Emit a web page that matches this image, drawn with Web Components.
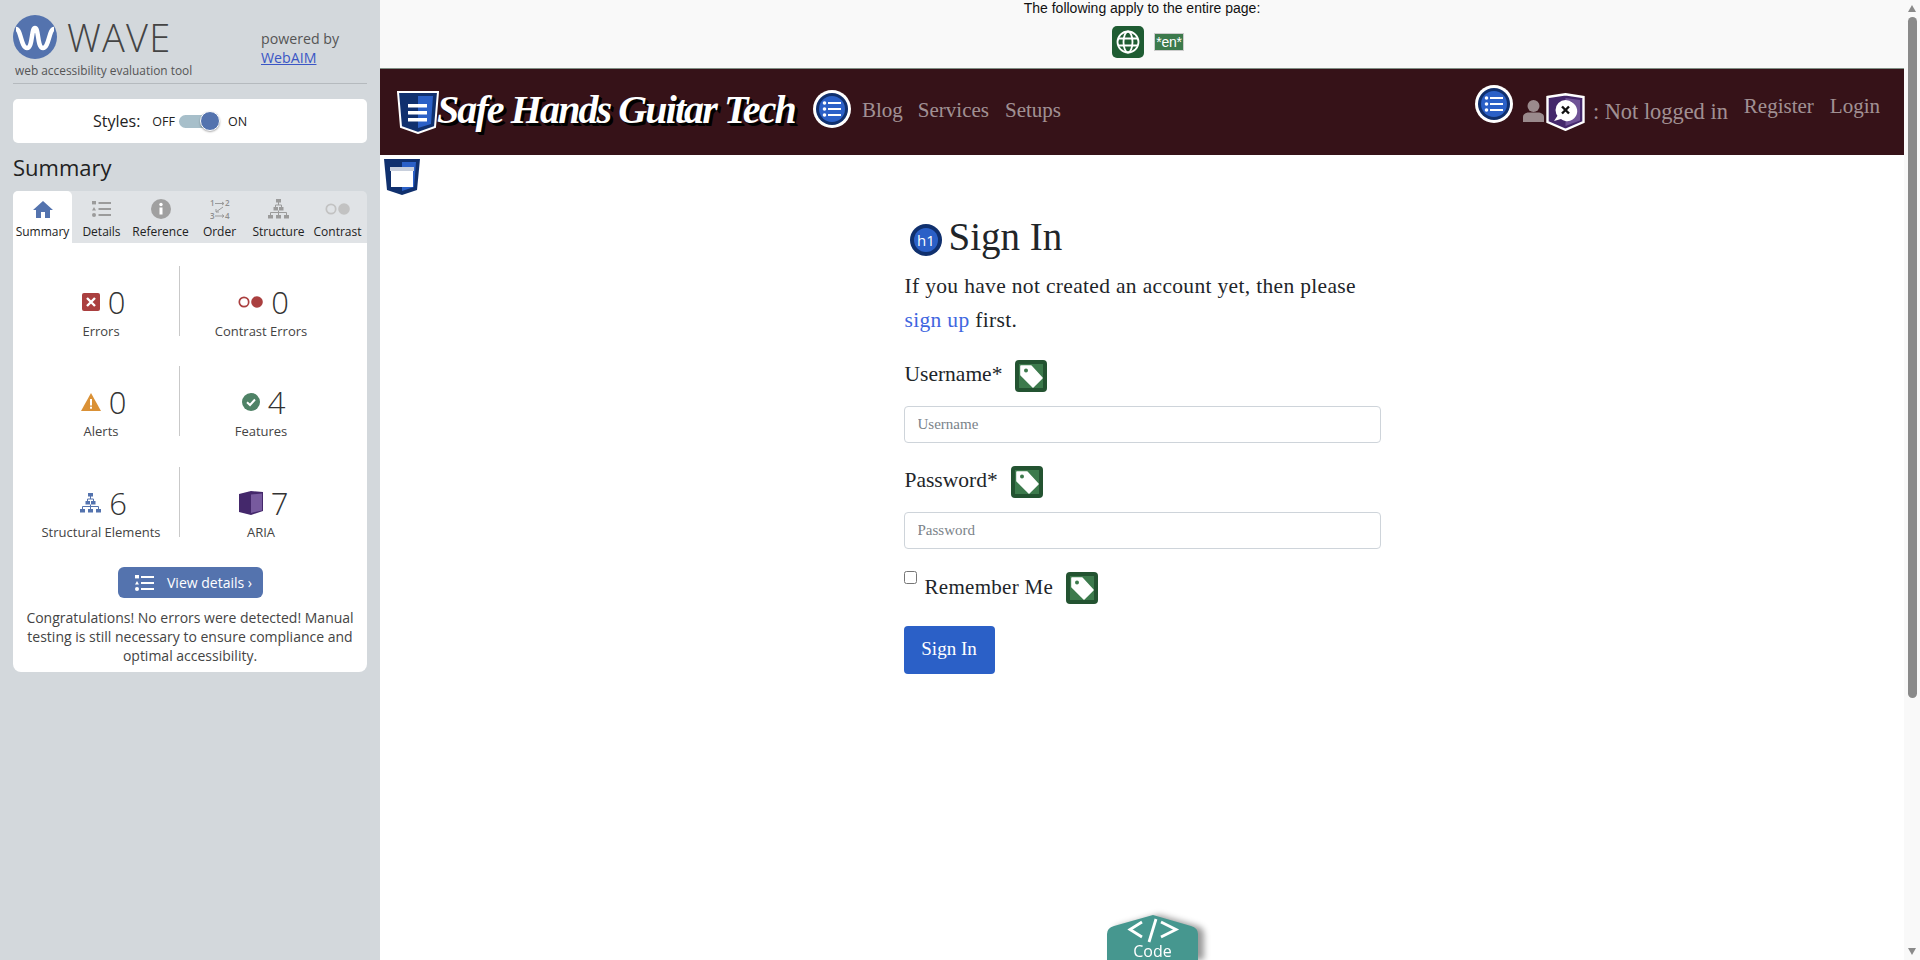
<!DOCTYPE html>
<html lang="en">
<head>
<meta charset="utf-8">
<title>Sign In</title>
<style>
    html, body { margin: 0; height: 960px; overflow: hidden; background: #fff; }
    body { display: flex; }
</style>
</head>
<body>
<wave-sidebar></wave-sidebar>
<site-main></site-main>
<page-scrollbar></page-scrollbar>

<script>
const structureIcon = (color) => `
    <svg width="21" height="20" viewBox="0 0 21 20" fill="${color}">
        <rect x="8" y="0" width="5" height="3.5"/><rect x="5.5" y="8" width="4.5" height="3.5"/><rect x="11" y="8" width="4.5" height="3.5"/>
        <rect x="0" y="16" width="5" height="3.5"/><rect x="8" y="16" width="5" height="3.5"/><rect x="16" y="16" width="5" height="3.5"/>
        <path d="M10.5 3v3M7.5 8V6h6v2M2.5 16v-2.5h16V16M10.5 11.5V16" fill="none" stroke="${color}"/>
    </svg>`

const listBars = (color, x, w) => `
    <g fill="${color}"><rect x="${x}" y="1" width="${w}" height="2"/><rect x="${x}" y="7" width="${w}" height="2"/><rect x="${x}" y="13" width="${w}" height="2"/></g>`

const shieldPath = 'M1 1H41L38 36L21 42L4 36Z'

const icons = {
    wave: `<svg width="44" height="44" viewBox="0 0 44 44"><circle cx="22" cy="22" r="22" fill="#5473ae"/>
        <path d="M3 14C8 14 8 33 14 33C20 33 18 13 22 13C26 13 24 33 30 33C36 33 36 14 41 14" fill="none" stroke="#fff" stroke-width="4.5"/></svg>`,
    home: `<svg width="20" height="17" viewBox="0 0 20 17"><path d="M10 0L20 9H17V17H12V11H8V17H3V9H0Z" fill="#5473ae"/></svg>`,
    details: `<svg width="19" height="16" viewBox="0 0 19 16"><rect x="0" y="0" width="4" height="3.4" fill="#9b9b9b"/><path d="M2 6L4 9.5H0Z" fill="#9b9b9b"/><circle cx="2" cy="14" r="2" fill="#9b9b9b"/>${listBars('#9b9b9b', 6.5, 12.5)}</svg>`,
    info: `<svg width="20" height="20" viewBox="0 0 20 20"><circle cx="10" cy="10" r="10" fill="#a0a0a0"/><rect x="8.5" y="8.5" width="3" height="7" fill="#fff"/><circle cx="10" cy="5.5" r="1.7" fill="#fff"/></svg>`,
    order: `<svg width="20" height="25" viewBox="0 -2 20 25"><g font-family="Open Sans" font-size="8" font-weight="600" fill="#8e8e8e"><text x="0" y="7">1</text><text x="15" y="7">2</text><text x="0" y="20">3</text><text x="15" y="20">4</text></g>
        <path d="M5 4.5H14M12 3L14 4.5L12 6M5 17H14M12 15.5L14 17L12 18.5M13 8L6 13M6 10V13H9" fill="none" stroke="#9b9b9b"/></svg>`,
    structureGrey: structureIcon('#9b9b9b'),
    contrastGrey: `<svg width="25" height="12" viewBox="0 0 25 12"><circle cx="6" cy="6" r="4.7" fill="none" stroke="#c2c2c2" stroke-width="1.7"/><circle cx="19" cy="6" r="5.8" fill="#c2c2c2"/></svg>`,
    error: `<svg width="18" height="18" viewBox="0 0 18 18"><rect width="18" height="18" rx="2" fill="#aa3f3f"/><path d="M5 5L13 13M13 5L5 13" stroke="#fff" stroke-width="2.4"/></svg>`,
    contrast: `<svg width="25" height="12" viewBox="0 0 25 12"><circle cx="6" cy="6" r="4.7" fill="none" stroke="#aa3f3f" stroke-width="1.7"/><circle cx="19" cy="6" r="5.8" fill="#aa3f3f"/></svg>`,
    alert: `<svg width="20" height="18" viewBox="0 0 20 18"><path d="M10 0L20 18H0Z" fill="#da9136"/><rect x="9" y="6" width="2" height="6.5" fill="#fff"/><rect x="9" y="13.7" width="2" height="2" fill="#fff"/></svg>`,
    feature: `<svg width="18" height="18" viewBox="0 0 18 18"><circle cx="9" cy="9" r="9" fill="#4f8266"/><path d="M5 9.3L8 12L13 6.5" fill="none" stroke="#fff" stroke-width="2"/></svg>`,
    structure: structureIcon('#5473ae'),
    aria: `<svg width="24" height="24" viewBox="0 0 24 24"><path d="M0 3L12 0L24 1V20L12 24L0 21Z" fill="#44286b"/><path d="M12 3.5L23 2.5V19.5L12 22Z" fill="#775a9e"/></svg>`,
    viewList: `<svg width="19" height="16" viewBox="0 0 19 16"><rect x="0" y="0" width="4" height="3.4" fill="#fff"/><path d="M2 6L4 9.5H0Z" fill="#fff"/><circle cx="2" cy="14" r="2" fill="#fff"/>${listBars('#fff', 6, 13)}</svg>`,
    globe: `<svg width="32" height="32" viewBox="0 0 32 32"><rect width="32" height="32" rx="5" fill="#1f5c33"/><g fill="none" stroke="#fff" stroke-width="1.8"><circle cx="16" cy="16" r="10.5"/><ellipse cx="16" cy="16" rx="4.5" ry="10.5"/><path d="M6 12.5H26M6 19.5H26"/></g></svg>`,
    tag: `<svg width="32" height="32" viewBox="0 0 32 32"><rect width="32" height="32" rx="4" fill="#235331"/><rect x="4" y="4" width="24" height="24" fill="#3c7a4c"/>
        <path d="M6 6H16L27 18L18 27L6 15Z" fill="#fff" stroke="#fff" stroke-width="1.6" stroke-linejoin="round"/><circle cx="11" cy="10.5" r="2" fill="#3c7a4c"/></svg>`,
    h1: `<svg width="32" height="32" viewBox="0 0 32 32"><circle cx="16" cy="16" r="16" fill="#10306e"/><circle cx="16" cy="16" r="12" fill="#2b60c7"/><text x="16" y="21.5" text-anchor="middle" font-family="Open Sans" font-size="15" fill="#fff">h1</text></svg>`,
    navlist: `<svg width="38" height="38" viewBox="0 0 38 38"><circle cx="19" cy="19" r="19" fill="#fff"/><circle cx="19" cy="19" r="16" fill="#10306e"/><circle cx="19" cy="19" r="13" fill="#2b60c7"/>
        <g fill="#fff"><circle cx="11.5" cy="13" r="1.8"/><circle cx="11.5" cy="19" r="1.8"/><circle cx="11.5" cy="25" r="1.8"/><rect x="15" y="12" width="13" height="2"/><rect x="15" y="18" width="13" height="2"/><rect x="15" y="24" width="13" height="2"/></g></svg>`,
    shieldList: `<svg width="42" height="43" viewBox="0 0 42 43"><path d="${shieldPath}" fill="#10306e" stroke="#fff" stroke-width="2"/><path d="M21 5H36L34 33L21 37Z" fill="#2b60c7"/>
        <g fill="#fff"><rect x="11" y="13" width="19" height="3.5"/><rect x="11" y="20" width="19" height="3.5"/><rect x="11" y="27" width="19" height="3.5"/></g></svg>`,
    shieldPage: `<svg width="36" height="36" viewBox="0 0 36 36"><path d="M0 0H36L33 31L18 36L3 31Z" fill="#10306e"/><path d="M18 3H32L30 28L18 32Z" fill="#2b60c7"/><rect x="6" y="8" width="24" height="4" fill="#c8cfdc"/><rect x="7" y="12" width="22" height="16" fill="#fff"/></svg>`,
    shieldChat: `<svg width="39" height="38" viewBox="0 0 39 38"><path d="M1.5 4L19.5 1.2L37.5 4V29L19.5 36.8L1.5 29Z" fill="#44286b" stroke="#fff" stroke-width="2.4"/><path d="M19.5 5L34 7V27.5L19.5 33Z" fill="#6f5396"/>
        <path d="M8 28L12 22A10 10 0 1 1 15 26Z" fill="#fff"/><circle cx="19.5" cy="17" r="10" fill="#fff"/><path d="M16 13.5L23 20.5M23 13.5L16 20.5" stroke="#111" stroke-width="2.4"/></svg>`,
    user: `<svg width="21" height="22" viewBox="0 0 21 22"><circle cx="10.5" cy="6" r="6" fill="#9a8a8c"/><path d="M0 22V17C0 14 3 12.5 6 12.5H15C18 12.5 21 14 21 17V22Z" fill="#9a8a8c"/></svg>`
}

class WaveIcon extends HTMLElement {
    constructor() {
        super();
        this.attachShadow({ mode: 'open' }).innerHTML = `
            <style>:host{display:inline-flex;flex:none} svg{display:block}</style>
            ${icons[this.getAttribute('name')]}`;
    }
}

class WaveStat extends HTMLElement {
    constructor() {
        super();
        this.attachShadow({ mode: 'open' }).innerHTML = `
            <style>
                :host{display:flex;flex-direction:column;align-items:center;height:70px}
                .top{display:flex;align-items:center;gap:8px;height:30px;margin-top:21px;padding-left:5px}
                .count{font-size:31px;font-weight:300;line-height:30px;color:#333}
                .label{font-size:13px;line-height:17px;color:#444;margin-top:6px;white-space:nowrap}
            </style>
            <div class="top"><slot></slot><span class="count">${this.getAttribute('count')}</span></div>
            <div class="label">${this.getAttribute('label')}</div>`;
    }
}

class WaveTabs extends HTMLElement {
    constructor() {
        super();
        const tabs = [['home', 'Summary'], ['details', 'Details'], ['info', 'Reference'], ['order', 'Order'], ['structureGrey', 'Structure'], ['contrastGrey', 'Contrast']];
        this.attachShadow({ mode: 'open' }).innerHTML = `
            <style>
                :host{display:grid;grid-template-columns:repeat(6,59px);height:52px;background:#e0e3e6;border-radius:5px 5px 0 0}
                .tab{display:flex;flex-direction:column;align-items:center;font-size:12px;color:#222;white-space:nowrap;padding-top:7px}
                .tab.on{background:#fff;border-radius:5px 5px 0 0}
                .ic{height:22px;display:flex;align-items:center;justify-content:center}
                .tx{margin-top:3px;line-height:17px}
            </style>
            ${tabs.map((t, i) => `<div class="tab ${i == 0 ? 'on' : ''}"><div class="ic"><wave-icon name="${t[0]}"></wave-icon></div><div class="tx">${t[1]}</div></div>`).join('')}`;
    }
}

class WaveToggle extends HTMLElement {
    constructor() {
        super();
        this.attachShadow({ mode: 'open' }).innerHTML = `
            <style>
                :host{display:flex;align-items:center;height:44px;background:#fff;border-radius:5px;padding-left:80px;color:#222}
                .name{font-size:16px;margin-right:12px}
                .st{font-size:12.5px}
                .track{position:relative;width:41px;height:13px;border-radius:7px;background:#a7bfca;margin:0 8px 0 4px}
                .knob{position:absolute;left:21px;top:-4px;width:20px;height:20px;border-radius:50%;background:#5473ae;box-shadow:0 1px 2px rgba(0,0,0,.35);border:.5px solid #fff;box-sizing:border-box}
            </style>
            <span class="name">Styles:</span><span class="st">OFF</span><div class="track"><div class="knob"></div></div><span class="st">ON</span>`;
    }
}

class WaveSidebar extends HTMLElement {
    constructor() {
        super();
        this.attachShadow({ mode: 'open' }).innerHTML = `
            <style>
                :host{display:block;flex:none;width:380px;height:960px;box-sizing:border-box;padding:0 13px;background:#d3d8dc;font-family:"Open Sans",sans-serif}
                header{display:flex;height:84px;box-sizing:border-box;border-bottom:1px solid #b5babe;padding-top:15px}
                .brand{width:248px}
                .logo{display:flex;align-items:center;gap:10px;height:44px}
                .word{font-size:38px;font-weight:300;color:#444;line-height:44px;letter-spacing:1.2px}
                .tagline{font-size:11.9px;line-height:17px;color:#555;margin:3px 0 0 2px;white-space:nowrap}
                .powered{font-size:14.2px;line-height:19px;color:#555;padding-top:14px}
                .powered a{color:#3a56c5}
                wave-toggle{margin-top:15px}
                h2{font-size:22px;font-weight:400;line-height:30px;margin:9px 0 9px;color:#222}
                .panel{height:429px;box-sizing:border-box;background:#fff;border-radius:0 0 8px 8px;padding-top:23px}
                .stats{display:grid;grid-template-columns:157px 162px;margin-left:10px;row-gap:30px}
                .stats wave-stat:nth-child(odd){border-right:1px solid #c9c9c9}
                .stats wave-stat:nth-child(n+5){margin-top:1px}
                .view{display:flex;align-items:center;width:145px;height:31px;margin:30px 0 0 105px;background:#5473ae;border-radius:6px;color:#fff;font-size:14px;box-sizing:border-box;padding-left:17px;gap:13px}
                p{margin:10px 5px 0;font-size:14px;line-height:19px;text-align:center;color:#444}
            </style>
            <header>
                <div class="brand">
                    <div class="logo"><wave-icon name="wave"></wave-icon><span class="word">WAVE</span></div>
                    <div class="tagline">web accessibility evaluation tool</div>
                </div>
                <div class="powered">powered by<br><a href="#">WebAIM</a></div>
            </header>
            <wave-toggle></wave-toggle>
            <h2>Summary</h2>
            <wave-tabs></wave-tabs>
            <div class="panel">
                <div class="stats">
                    <wave-stat label="Errors" count="0"><wave-icon name="error"></wave-icon></wave-stat>
                    <wave-stat label="Contrast Errors" count="0"><wave-icon name="contrast"></wave-icon></wave-stat>
                    <wave-stat label="Alerts" count="0"><wave-icon name="alert"></wave-icon></wave-stat>
                    <wave-stat label="Features" count="4"><wave-icon name="feature"></wave-icon></wave-stat>
                    <wave-stat label="Structural Elements" count="6"><wave-icon name="structure"></wave-icon></wave-stat>
                    <wave-stat label="ARIA" count="7"><wave-icon name="aria"></wave-icon></wave-stat>
                </div>
                <div class="view"><wave-icon name="viewList"></wave-icon><span>View details ›</span></div>
                <p>Congratulations! No errors were detected! Manual testing is still necessary to ensure compliance and optimal accessibility.</p>
            </div>`;
    }
}

class LangBar extends HTMLElement {
    constructor() {
        super();
        this.attachShadow({ mode: 'open' }).innerHTML = `
            <style>
                :host{display:flex;flex-direction:column;align-items:center;height:69px;box-sizing:border-box;background:#f9f9f9;border-bottom:1px solid #7f8f84;font:14px/16px "Liberation Sans",sans-serif;color:#111}
                .row{display:flex;align-items:center;gap:10px;margin-top:10px;padding-left:12px}
                .en{background:#3c7a4c;color:#fff;border:1px solid #ccc;font-size:14px;line-height:16px;padding:0 1px;letter-spacing:-.2px}
            </style>
            <div>The following apply to the entire page:</div>
            <div class="row"><wave-icon name="globe"></wave-icon><span class="en">*en*</span></div>`;
    }
}

class SiteNav extends HTMLElement {
    constructor() {
        super();
        this.attachShadow({ mode: 'open' }).innerHTML = `
            <style>
                :host{display:flex;height:86px;box-sizing:border-box;padding:0 24px 0 17px;background:#361218;font-family:"Liberation Serif",serif;font-size:21px;color:rgba(255,255,255,.55);white-space:nowrap}
                .left,.right{display:flex;align-items:flex-start}
                .right{margin-left:auto}
                .shield{margin-top:22px}
                .title{width:358px;font-size:40px;font-style:italic;font-weight:700;color:#fff;line-height:48px;margin:17px 18px 0 -2px;text-shadow:2px 2px 0 #000,3px 3px 0 #000;letter-spacing:-1.9px}
                .circle{margin-top:21px}
                .link{line-height:24px;margin-top:29px}
                .left .link{margin-left:12px}
                .left .first{margin-left:11px}
                .left .link + .link{margin-left:15px}
                .left .link:last-child{margin-left:16px}
                .right .circle{margin-top:16px}
                .user{margin:31px 2px 0 10px}
                .chat{margin-top:24px}
                .status{margin:31px 16px 0 8px;line-height:24px;font-size:22.4px}
                .right .link{margin-top:25px}
                .right .link + .link{margin-left:16px}
            </style>
            <div class="left">
                <wave-icon class="shield" name="shieldList"></wave-icon>
                <span class="title">Safe Hands Guitar Tech</span>
                <wave-icon class="circle" name="navlist"></wave-icon>
                <span class="link first">Blog</span><span class="link">Services</span><span class="link">Setups</span>
            </div>
            <div class="right">
                <wave-icon class="circle" name="navlist"></wave-icon>
                <wave-icon class="user" name="user"></wave-icon>
                <wave-icon class="chat" name="shieldChat"></wave-icon>
                <span class="status">: Not logged in</span>
                <span class="link">Register</span><span class="link">Login</span>
            </div>`;
    }
}

class FormField extends HTMLElement {
    constructor() {
        super();
        this.attachShadow({ mode: 'open' }).innerHTML = `
            <style>
                :host{display:block;margin-top:23px}
                .label{display:flex;align-items:center;height:32px;font-size:21.5px;gap:13px;padding-left:1px}
                .label span{padding-bottom:4px}
                input{display:block;box-sizing:border-box;width:100%;height:37px;margin-top:14px;padding:0 13px;border:1px solid #ced4da;border-radius:4px;font:15px "Liberation Serif",serif;outline:none}
                input::placeholder{color:#7b8389}
            </style>
            <div class="label"><span>${this.getAttribute('label')}*</span><wave-icon name="tag"></wave-icon></div>
            <input type="text" placeholder="${this.getAttribute('label')}">`;
    }
}

class SignInForm extends HTMLElement {
    constructor() {
        super();
        this.attachShadow({ mode: 'open' }).innerHTML = `
            <style>
                :host{display:block;width:477px;margin:0 auto;font-family:"Liberation Serif",serif;color:#212529}
                h1{display:flex;align-items:center;gap:7px;height:48px;margin:59px 0 0 6px;font-size:39px;font-weight:400}
                h1 wave-icon{margin-top:4px}
                h1 span{margin-top:-4px}
                p{margin:7px 0 0 1px;font-size:21.5px;line-height:34px;letter-spacing:.33px}
                a{color:#3f66e0;text-decoration:none}
                .remember{display:flex;height:32px;align-items:center;margin-top:23px;font-size:21px}
                .remember input{width:13px;height:13px;margin:0 8px 0 0;align-self:flex-start;margin-top:-1px}
                .remember span{margin-right:13px;letter-spacing:.3px;padding-bottom:2px}
                button{display:block;width:91px;height:48px;margin-top:22px;padding:0 0 2px;border:0;border-radius:4px;background:#2b60c7;color:#fff;font:19px "Liberation Serif",serif}
            </style>
            <h1><wave-icon name="h1"></wave-icon><span>Sign In</span></h1>
            <p>If you have not created an account yet, then please<br><a href="#">sign up</a> first.</p>
            <form-field label="Username"></form-field>
            <form-field label="Password"></form-field>
            <div class="remember"><input type="checkbox"><span>Remember Me</span><wave-icon name="tag"></wave-icon></div>
            <button>Sign In</button>`;
    }
}

class CodeTab extends HTMLElement {
    constructor() {
        super();
        this.attachShadow({ mode: 'open' }).innerHTML = `
            <style>
                :host{position:absolute;left:727px;bottom:0;width:91px;height:45px;font-family:"Open Sans",sans-serif;color:#fff;filter:drop-shadow(6px 0 3px rgba(0,0,0,.4))}
                svg{position:absolute;left:0;top:0}
                span{position:absolute;left:0;right:0;top:27px;text-align:center;font-size:16px;line-height:18px}
            </style>
            <svg width="91" height="45" viewBox="0 0 91 45">
                <path d="M0 45V19Q0 13 7 11L46 0L84 11Q91 13 91 19V45Z" fill="#46978f"/>
                <path d="M35 7L23 14.5L35 22M54 7L69 14.5L54 22M49 4L42 27" fill="none" stroke="#fff" stroke-width="2.8"/>
            </svg>
            <span>Code</span>`;
    }
}

class SiteMain extends HTMLElement {
    constructor() {
        super();
        this.attachShadow({ mode: 'open' }).innerHTML = `
            <style>
                :host{display:block;position:relative;flex:1;min-width:0;height:960px;overflow:hidden}
                .landmark{position:absolute;left:4px;top:159px}
            </style>
            <lang-bar></lang-bar>
            <site-nav></site-nav>
            <wave-icon class="landmark" name="shieldPage"></wave-icon>
            <sign-in-form></sign-in-form>
            <code-tab></code-tab>`;
    }
}

class PageScrollbar extends HTMLElement {
    constructor() {
        super();
        this.attachShadow({ mode: 'open' }).innerHTML = `
            <style>
                :host{display:flex;flex-direction:column;align-items:center;flex:none;width:16px;height:960px;background:#f9f9f9}
                .up,.down{width:0;height:0;border-left:4.5px solid transparent;border-right:4.5px solid transparent}
                .up{border-bottom:7px solid #8a8a8a;margin-top:5px}
                .down{border-top:7px solid #8a8a8a;margin-top:auto;margin-bottom:5px}
                .thumb{width:9px;height:681px;margin-top:5px;border-radius:5px;background:#8a8a8a}
            </style>
            <div class="up"></div><div class="thumb"></div><div class="down"></div>`;
    }
}

customElements.define('wave-icon', WaveIcon);
customElements.define('wave-stat', WaveStat);
customElements.define('wave-tabs', WaveTabs);
customElements.define('wave-toggle', WaveToggle);
customElements.define('wave-sidebar', WaveSidebar);
customElements.define('lang-bar', LangBar);
customElements.define('site-nav', SiteNav);
customElements.define('form-field', FormField);
customElements.define('sign-in-form', SignInForm);
customElements.define('code-tab', CodeTab);
customElements.define('site-main', SiteMain);
customElements.define('page-scrollbar', PageScrollbar);
</script>
</body>
</html>
